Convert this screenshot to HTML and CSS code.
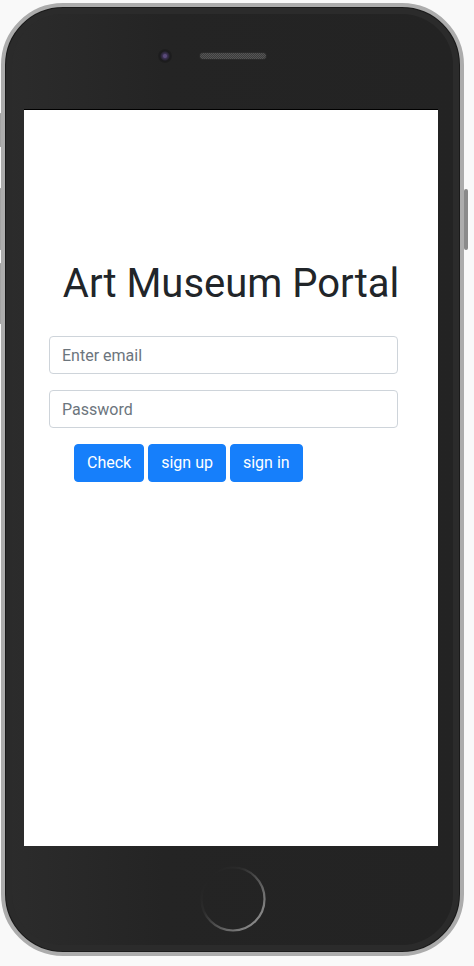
FILE: index.html
```html
<!DOCTYPE html>
<html lang="en">
<head>
<meta charset="utf-8">
<title>Art Museum Portal</title>
<link rel="stylesheet" href="styles.css">
</head>
<body>
<div class="phone">
  <span class="side-btn side-left side-mute"></span>
  <span class="side-btn side-left side-vol-up"></span>
  <span class="side-btn side-left side-vol-down"></span>
  <span class="side-btn side-right"></span>
  <div class="phone-top">
    <span class="camera"></span>
    <span class="speaker"></span>
  </div>
  <div class="screen">
    <h1 class="title">Art Museum Portal</h1>
    <form class="login-form">
      <input class="form-control" type="email" placeholder="Enter email">
      <input class="form-control" type="password" placeholder="Password">
      <div class="actions">
        <button type="button" class="btn">Check</button>
        <button type="button" class="btn">sign up</button>
        <button type="button" class="btn">sign in</button>
      </div>
    </form>
  </div>
  <div class="home">
    <svg width="66" height="66" viewBox="0 0 66 66">
      <defs>
        <linearGradient id="ring" x1="0.1" y1="0.15" x2="0.9" y2="0.85">
          <stop offset="0" stop-color="#232323"/>
          <stop offset="0.3" stop-color="#2c2c2c"/>
          <stop offset="0.6" stop-color="#555"/>
          <stop offset="1" stop-color="#8a8a8a"/>
        </linearGradient>
      </defs>
      <circle cx="33" cy="33" r="31.5" fill="none" stroke="url(#ring)" stroke-width="2.2"/>
    </svg>
  </div>
</div>
</body>
</html>
```

FILE: styles.css
```css
html, body {
  margin: 0;
  padding: 0;
}

body {
  background: #f9f9f9;
  font-family: Roboto, "Liberation Sans", Arial, sans-serif;
  width: 474px;
  height: 966px;
  overflow: hidden;
}

.phone {
  position: relative;
  box-sizing: border-box;
  margin: 3px 0 0 1px;
  width: 463px;
  height: 953px;
  border: 4px solid #acacac;
  border-radius: 62px;
  background: linear-gradient(to right, #2c2c2c 0%, #242424 35%, #232323 100%);
  box-shadow: inset 0 0 0 1px #1a1a1a, inset 0 0 0 7px #2b2b2b;
  display: flex;
  flex-direction: column;
}

.side-btn {
  position: absolute;
  width: 4px;
  border-radius: 2px;
  background: #a2a2a2;
  z-index: -1;
}

.side-left { left: -6px; }
.side-mute { top: 106px; height: 34px; }
.side-vol-up { top: 181px; height: 62px; }
.side-vol-down { top: 256px; height: 61px; }

.side-right {
  right: -8px;
  top: 182px;
  height: 61px;
  background: #8a8a8a;
}

.phone-top {
  height: 102px;
  display: flex;
  align-items: center;
  padding-left: 153px;
  box-sizing: border-box;
  padding-bottom: 4px;
}

.camera {
  width: 14px;
  height: 14px;
  border-radius: 50%;
  background: radial-gradient(circle at 50% 50%, #5a4a7a 0 1.5px, #3b3152 2.5px, #2a2535 4px, #1b1b1d 5px, #1e1e1e 7px);
}

.speaker {
  margin-left: 28px;
  width: 66px;
  height: 6px;
  border-radius: 3px;
  background-color: #3c3c3c;
  background-image:
    linear-gradient(45deg, #555 25%, transparent 25%, transparent 75%, #555 75%),
    linear-gradient(45deg, #555 25%, transparent 25%, transparent 75%, #555 75%);
  background-size: 2px 2px;
  background-position: 0 0, 1px 1px;
  box-shadow: 0 0 0 1px #2a2a2a;
}

.screen {
  box-sizing: border-box;
  margin-left: 19px;
  width: 414px;
  height: 737px;
  border-top: 1px solid #000;
  background: #fff;
  padding-top: 150px;
}

.title {
  margin: 0 0 28px 0;
  font-family: Roboto, "Liberation Sans", Arial, sans-serif;
  font-weight: 400;
  font-size: 40px;
  line-height: 48px;
  color: #212529;
  text-align: center;
}

.login-form {
  padding-left: 25px;
  width: 349px;
  display: flex;
  flex-direction: column;
  gap: 16px;
}

.form-control {
  box-sizing: border-box;
  display: block;
  width: 100%;
  height: 38px;
  margin: 0;
  padding: 6px 12px;
  font-family: Roboto, "Liberation Sans", Arial, sans-serif;
  font-size: 16px;
  line-height: 24px;
  color: #495057;
  background: #fff;
  border: 1px solid #ced4da;
  border-radius: 4px;
  outline: none;
}

.form-control::placeholder {
  color: #6c757d;
  opacity: 1;
}

.actions {
  display: flex;
  gap: 4px;
  padding-left: 25px;
}

.btn {
  box-sizing: border-box;
  height: 38px;
  padding: 6px 12px;
  font-family: Roboto, "Liberation Sans", Arial, sans-serif;
  font-size: 16px;
  line-height: 24px;
  color: #fff;
  background: #167ffb;
  border: 1px solid #167ffb;
  border-radius: 4px;
  cursor: pointer;
}

.home {
  margin: 20px auto 0;
  width: 66px;
  height: 66px;
}

.home svg {
  display: block;
}
```
